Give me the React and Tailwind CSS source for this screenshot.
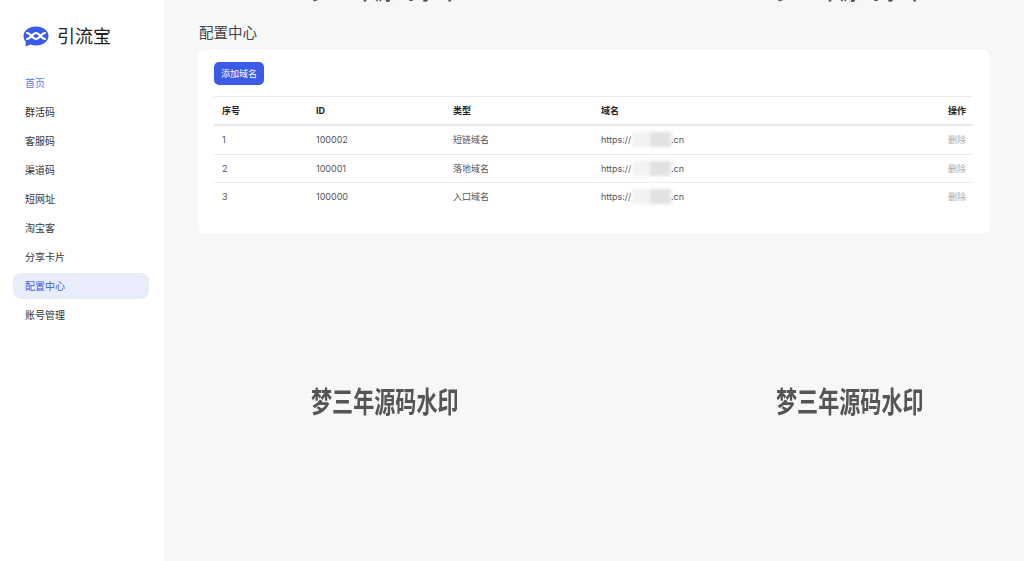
const nav = ["首页","群活码","客服码","渠道码","短网址","淘宝客","分享卡片","配置中心","账号管理"];
const rows = [
  [1,"100002","短链域名"],
  [2,"100001","落地域名"],
  [3,"100000","入口域名"],
];
const font = { fontFamily: '"Inter", "Noto Sans CJK SC", sans-serif' };

function Logo() {
  return (
    <svg width="26" height="22" viewBox="0 0 26 22">
      <path d="M13 0.5C20 0.5 25.500 4.700 25.500 10S20 19.500 13 19.500C11 19.500 9.200 19.200 7.500 18.500L2.500 20.500L2.800 15.800C1.300 14.100 0.500 12.100 0.500 10C0.500 4.700 6 0.500 13 0.500Z" fill="#3b5be6"/>
      <path d="M4 7C7.500 7 9.500 13 13 13S18.500 7 22 7M4 13C7.500 13 9.500 7 13 7S18.500 13 22 13" fill="none" stroke="#fff" strokeWidth="2" strokeLinecap="round"/>
    </svg>
  );
}

function Mark({ className }) {
  return (
    <div className={`absolute font-bold text-[29px] leading-[38px] text-[#555] whitespace-nowrap pointer-events-none blur-[0.6px] origin-left scale-x-[0.727] ${className}`}>
      梦三年源码水印
    </div>
  );
}

function Blurred() {
  return (
    <span className="absolute left-[31px] top-[-1px] w-[41px] h-[15px] bg-[#f3f3f5] blur-[1.5px] flex justify-end pr-[3px]">
      <span className="w-[20px] h-full bg-[#e2e2e5]" />
    </span>
  );
}

export default function App() {
  return (
    <div style={font} className="relative flex w-[1024px] h-[561px] overflow-hidden bg-[#f6f7f9]">
      <aside className="w-[164px] shrink-0 bg-white">
        <div className="flex items-start gap-[8px] pl-[23px] pt-[26px] h-[70px]">
          <Logo />
          <span className="text-[18px] leading-[22px] text-[#222]">引流宝</span>
        </div>
        <nav className="flex flex-col gap-[3px] pl-[13px] pr-[15px]">
          {nav.map((n) => {
            const active = n === "配置中心";
            const first = n === "首页";
            return (
              <div
                key={n}
                className={`h-[26px] rounded-lg pl-[12px] flex items-center text-[10px] ${
                  active ? "bg-[#e9edfb] text-[#3b5be6]" : first ? "text-[#5f7bea]" : "text-[#333]"
                }`}
              >
                {n}
              </div>
            );
          })}
        </nav>
      </aside>
      <main className="flex-1 pl-[34px] pr-[34px]">
        <h1 className="pt-[23px] pl-px h-[50px] text-[14.5px] leading-[20px] font-normal text-[#444]">配置中心</h1>
        <section className="bg-white rounded-md h-[183px] pt-[12px] px-[16px]">
          <button className="block w-[50px] h-[23px] rounded-[5px] bg-[#3b5be6] text-white text-[9px] leading-[23px] text-center">
            添加域名
          </button>
          <div className="mt-[11px] w-[759px] text-[9px] text-[#555]">
            <div className="flex items-center h-[30px] border-t border-b-2 border-t-[#ececef] border-b-[#e8e8ea] font-bold text-[#222]">
              <span className="w-[102px] pl-[8px]">序号</span>
              <span className="w-[137px]">ID</span>
              <span className="w-[148px]">类型</span>
              <span className="flex-1">域名</span>
              <span className="pr-[7px]">操作</span>
            </div>
            {rows.map(([i, id, type], idx) => (
              <div key={id} className={`flex items-center h-[28.500px] ${idx < 2 ? "border-b border-[#ececef]" : "pb-[2px]"}`}>
                <span className="w-[102px] pl-[8px]">{i}</span>
                <span className="w-[137px]">{id}</span>
                <span className="w-[148px]">{type}</span>
                <span className="flex-1">
                  <span className="relative inline-block w-[83px]">
                    https://
                    <Blurred />
                    <span className="absolute right-0 top-0">.cn</span>
                  </span>
                </span>
                <span className="pr-[7px] text-[#aaa]">删除</span>
              </div>
            ))}
          </div>
        </section>
      </main>
      <Mark className="left-[311px] top-[384px]" />
      <Mark className="left-[776px] top-[384px]" />
      <Mark className="left-[311px] top-[-30px]" />
      <Mark className="left-[776px] top-[-30px]" />
    </div>
  );
}
